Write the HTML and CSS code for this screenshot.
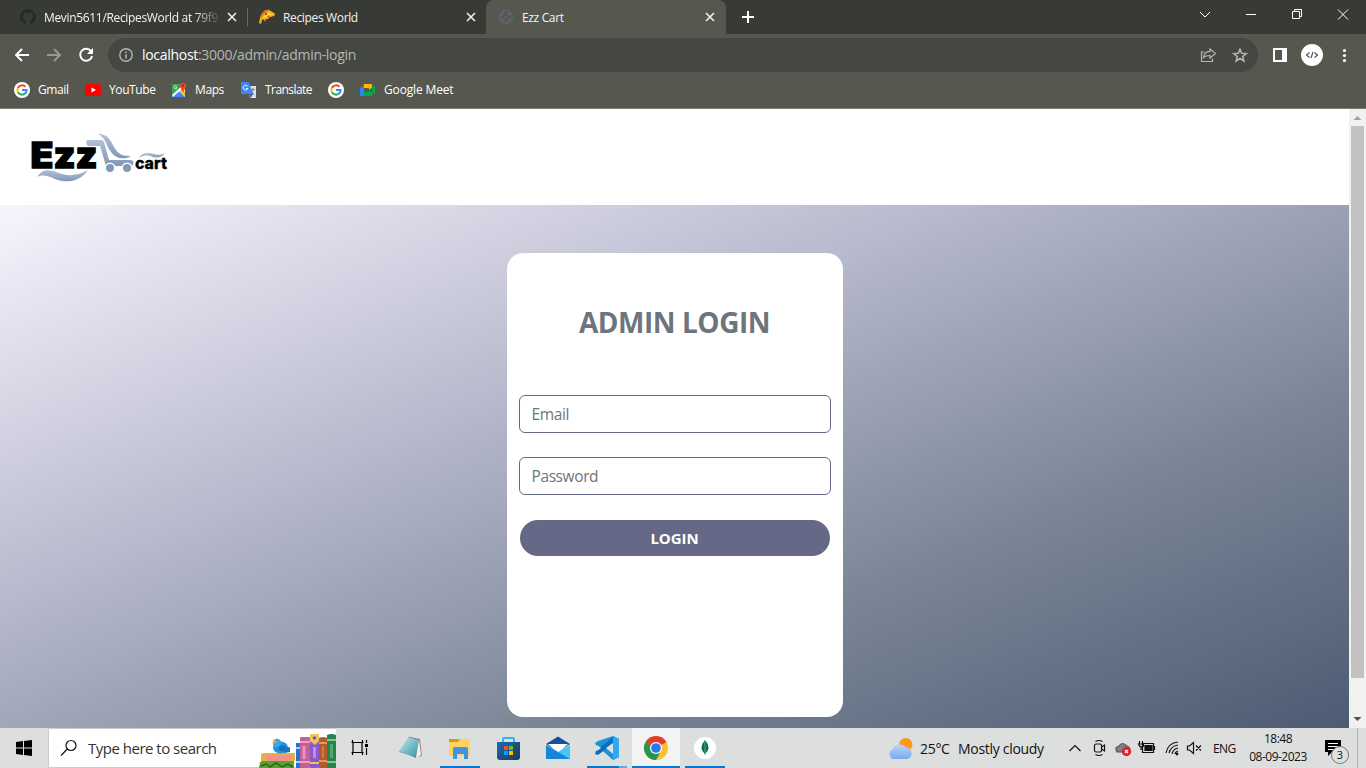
FILE: index.html
```html
<!DOCTYPE html>
<html lang="en">
<head>
<meta charset="utf-8">
<title>Ezz Cart</title>
<link rel="stylesheet" href="styles.css">
</head>
<body>
<svg class="defs" width="0" height="0" aria-hidden="true">
  <symbol id="x" viewBox="0 0 10 10"><path d="M1 1 9 9M9 1 1 9" fill="none" stroke="#f1f1f1" stroke-width="1.6"/></symbol>
  <symbol id="google" viewBox="0 0 16 16"><circle cx="8" cy="8" r="8" fill="#fff"/><g fill="none" stroke-width="2"><path d="M11.4 4.7A4.6 4.6 0 0 0 3.9 6" stroke="#ea4335"/><path d="M3.9 6a4.6 4.6 0 0 0 0 4.1" stroke="#fbbc05"/><path d="M3.9 10.1a4.6 4.6 0 0 0 7.1 1.4" stroke="#34a853"/><path d="M8 8.1h4.6a4.7 4.7 0 0 1-1.6 3.4" stroke="#4285f4"/></g></symbol>
</svg>

<header class="tabs">
  <div class="tab tab-first">
    <svg class="fav" viewBox="0 0 16 16"><path fill="#24292f" d="M8 0a8 8 0 0 0-2.5 15.6c.4.1.5-.2.5-.4v-1.5c-2 .5-2.7-.5-2.9-1-.1-.3-.6-1-1-1.200-.3-.2-.8-.6 0-.6s1.200.6 1.400.9c.8 1.300 2 .9 2.500.7.1-.6.300-1 .6-1.200-1.800-.2-3.700-.9-3.700-4 0-.9.300-1.600.8-2.100-.1-.2-.4-1 .1-2.100 0 0 .7-.2 2.200.8a7.600 7.600 0 0 1 4 0c1.500-1 2.200-.8 2.200-.8.4 1.100.2 1.900.1 2.100.5.6.8 1.300.8 2.200 0 3.100-1.900 3.800-3.700 4 .300.200.600.700.600 1.500v2.200c0 .200.100.500.500.400A8 8 0 0 0 8 0Z"/></svg>
    <span class="tab-name name-a">Mevin5611/RecipesWorld at 79f9</span>
    <svg class="close"><use href="#x"/></svg>
  </div>
  <div class="tab tab-second">
    <svg class="fav" viewBox="0 0 16 16"><path d="M0 14 1 9C3 4 6 0 10 1l5 3q2 1 0 3l-4 1-2 2-2 0-1 3-1-3-2 1-1 4Z" fill="#f4b321"/><path d="M1 8C3 3 6 0 10 1L8 3C5 4 4 6 2 10Z" fill="#d87916"/><path d="m8 4 6 1-8 3-3 2Z" fill="#ffdc49"/><circle cx="7" cy="5" r="1.200" fill="#d33c22"/><circle cx="9.500" cy="7.500" r=".9" fill="#d33c22"/></svg>
    <span class="tab-name name-b">Recipes World</span>
    <svg class="close"><use href="#x"/></svg>
  </div>
  <div class="tab tab-active">
    <svg class="fav" viewBox="0 0 16 16"><circle cx="8" cy="8" r="7.200" fill="#5f6368"/><path d="M2 8q3-.500 4 1.500h3L7 13M10 2 7 3.500 6 6h3l2 2 3-1" fill="none" stroke="#51554f" stroke-width="1.700"/></svg>
    <span class="tab-name name-c">Ezz Cart</span>
    <svg class="close"><use href="#x"/></svg>
  </div>
  <svg class="plus" viewBox="0 0 12 12"><path d="M6 0v12M0 6h12" stroke="#fff" stroke-width="2"/></svg>
  <svg class="winctl" viewBox="0 0 160 34" fill="none" stroke="#fff"><path d="m10 12 5 5 5-5M56 14.500h10M102.500 11.500h7v7h-7zM104.500 11v-1.500h7v7h-2M148 9.500l10 10m0-10-10 10"/></svg>
</header>

<div class="toolbar">
  <svg class="nav" viewBox="0 0 108 42" fill="none" stroke-width="1.900"><path d="M29 21H16m6-6-6 6 6 6" stroke="#fff"/><path d="M47 21h13m-6-6 6 6-6 6" stroke="#979992"/><path d="M91.300 17.500a6 6 0 1 0 .8 4.500" stroke="#fff"/><path d="M93 14v6h-6z" fill="#fff"/></svg>
  <div class="address">
    <svg class="info" viewBox="0 0 14 14"><circle cx="7" cy="7" r="6.200" fill="none" stroke="#b5b7b3" stroke-width="1.400"/><path d="M7 6.200V10.500M7 3.500v1.500" stroke="#b5b7b3" stroke-width="1.500"/></svg>
    <span class="url"><b>localhost</b>:3000/admin/admin-login</span>
    <svg class="actions" viewBox="0 0 50 34" fill="none" stroke="#b3b5b0" stroke-width="1.200"><path d="M4.500 14h-3v9.500h11v-3M10 11l5.500 4.500L10 20v-2.500c-3 0-5 .5-6.500 2 .5-4 3-6 6.500-6.200z"/><path d="m40 11 1.700 4.300 4.600.3-3.600 2.900 1.200 4.500-3.900-2.500-3.900 2.500 1.200-4.500-3.600-2.900 4.600-.3z" stroke-width="1.500"/></svg>
  </div>
  <svg class="extras" viewBox="0 0 108 42"><path d="M15 14h14v14H15zM17 16v10h7V16z" fill="#fff" fill-rule="evenodd"/><circle cx="54" cy="21" r="11" fill="#fff"/><path d="m51.500 18.500-3 2.500 3 2.500m5-5 3 2.500-3 2.500m-1.500-5.500-2 6" fill="none" stroke="#555" stroke-width="1.200"/><g fill="#fff"><circle cx="86.500" cy="16.500" r="1.600"/><circle cx="86.500" cy="21.500" r="1.600"/><circle cx="86.500" cy="26.500" r="1.600"/></g></svg>
</div>

<nav class="bookmarks">
  <a class="bm bm-gmail"><svg><use href="#google"/></svg><span>Gmail</span></a>
  <a class="bm bm-youtube"><svg viewBox="0 0 16 16"><rect y="2" width="16" height="12" rx="2.500" fill="red"/><path d="m6.500 5.500 4.500 2.500-4.500 2.500z" fill="#fff"/></svg><span>YouTube</span></a>
  <a class="bm bm-maps"><svg viewBox="0 0 16 16"><path d="M1 2h13v13H1z" fill="#e8eaed"/><path d="M1 2h9v5l-9 8z" fill="#34a853"/><path d="m1 15 6-7 7 7z" fill="#4285f4"/><path d="M1 13 11 4l1 2L2 15z" fill="#fff"/><path d="m9 9 5 5v-4l-4-3z" fill="#fbbc04"/><path d="M12 10 9 5a3.200 3.200 0 1 1 6 0z" fill="#ea4335"/><circle cx="12" cy="3.600" r="1.100" fill="#8e261d"/><path d="M5.800 4.500a1.500 1.500 0 1 0 .2 1.200H4.500" stroke="#fff" fill="none" stroke-width=".7"/></svg><span>Maps</span></a>
  <a class="bm bm-translate"><svg viewBox="0 0 16 16"><path d="M6 4h9v12H9z" fill="#dce0e4"/><path d="M1 0h7l4 12H1q-1 0-1-1V1q0-1 1-1" fill="#4285f4"/><path d="m8 12 1.500 4 2.500-4z" fill="#285bb8"/><path d="M6.700 4.400a2.400 2.400 0 1 0 .2 2H4.800" fill="none" stroke="#fff"/><path d="M10 7.500H14M11.900 6v2c0 2-1 3-2 4m.5-3 3 4" fill="none" stroke="#6a7785" stroke-width=".8"/></svg><span>Translate</span></a>
  <a class="bm bm-google"><svg><use href="#google"/></svg></a>
  <a class="bm bm-meet"><svg viewBox="0 0 16 16"><path d="M0 6h4v8H1q-1 0-1-1z" fill="#2684fc"/><path d="m4 2-4 4h4z" fill="#ea4335"/><path d="M4 2h7q1 0 1 1v5H9V6H4z" fill="#fb0"/><path d="M4 10h5V8h3v5q0 1-1 1H4z" fill="#00ac47"/><path d="m9 8 3-2.500V10.500z" fill="#00832d"/><path d="m12 5.500 2.500-2q.5 0 .5.500v8q0 .500-.5.500l-2.500-2z" fill="#00ac47"/></svg><span>Google Meet</span></a>
</nav>

<main class="viewport">
  <div class="page">
    <div class="site-head">
      <svg class="logo" viewBox="0 0 160 84">
        <defs><linearGradient id="lg" x2="0" y2="1"><stop stop-color="#b2c1d6"/><stop offset="1" stop-color="#8197b6"/></linearGradient></defs>
        <g fill="url(#lg)"><path d="M17 57c5-8 12-8 19-5 10 4 20 5 32-2-7 11-21 14-33 9-7-3-12-5-18-2Z"/><path d="M78 14c12 0 13 9 18 16 3 5 8 6 15 6-6 4-15 3-20-4-6-8-5-14-13-18Z"/><path d="M67 20h14q2 0 3 2l5 18h20q6 0 4 4l-1 2H86l-6-20H68q-3-3-1-6Z"/><circle cx="90" cy="48" r="4.500"/><circle cx="107" cy="48" r="4.500"/><path d="M119 38c5-7 10-5 15-4 4 1 7 1 11-1-3 5-8 5-12 4-5-2-8-3-14 1Z"/></g>
        <g fill="#fff"><circle cx="90" cy="48" r="5.500"/><circle cx="107" cy="48" r="5.500"/></g><g fill="#8399b7"><circle cx="90" cy="48" r="4"/><circle cx="107" cy="48" r="4"/></g>
        <text class="logo-ezz" x="10.500" y="48" textLength="67" lengthAdjust="spacingAndGlyphs">Ezz</text>
        <text class="logo-cart" x="115" y="49" textLength="32" lengthAdjust="spacingAndGlyphs">cart</text>
      </svg>
    </div>
    <div class="stage">
      <form class="card">
        <h1>ADMIN LOGIN</h1>
        <input class="field email" type="text" placeholder="Email">
        <input class="field password" type="text" placeholder="Password">
        <button class="submit" type="button">LOGIN</button>
      </form>
    </div>
  </div>
  <div class="scrollbar">
    <svg viewBox="0 0 17 17"><path d="M4.500 11h8l-4-4z" fill="#a3a3a3"/></svg>
    <div class="thumb"></div>
    <svg viewBox="0 0 17 17"><path d="M4.500 6h8l-4 4z" fill="#505050"/></svg>
  </div>
</main>

<footer class="taskbar">
  <div class="start"><svg viewBox="0 0 16 16"><path d="m0 2 7-1v6.500H0zM8 1l8-1v7.500H8zM0 8.500h7V15l-7-1zM8 8.500h8V16l-8-1z"/></svg></div>
  <div class="search">
    <svg class="glass" viewBox="0 0 18 18"><circle cx="11" cy="6.500" r="5" fill="none" stroke="#111" stroke-width="1.200"/><path d="m7.400 10-6.400 6.500" stroke="#111" stroke-width="1.200"/></svg>
    <span>Type here to search</span>
    <svg class="books" viewBox="0 0 78 40">
      <path d="M2 34q3-2 8-1h26v7H1Z" fill="#58a12e"/><path d="m3 38 5-2 4 3 6-4 6 4 6-3 5 3" fill="none" stroke="#2e6519" stroke-width="1.500"/>
      <path d="M3 27q0-2 3-2h31v8H3Z" fill="#e9ae42"/><path d="M11 27h19l4 3-4 3H11q-7-3 0-6Z" fill="#ef918c"/>
      <ellipse cx="22.500" cy="19.500" rx="7.500" ry="6" fill="#278fdd"/><circle cx="19" cy="15" r="4.300" fill="#3aa5ed"/><path d="m15.500 11-.5 5 4-2z" fill="#f5ad32"/><path d="M21 18q5-2 8 2-3 5-8 2z" fill="#1570bf"/><path d="m26 20 6-1v5l-6 1z" fill="#1b74c4"/>
      <rect x="38" y="15" width="5" height="25" fill="#2773d2"/><path d="M38 20h5m-5 14h5" stroke="#9ed4fb" stroke-width="2"/>
      <rect x="42" y="9" width="10" height="31" rx="1" fill="#c26098"/><path d="M42 14h10m-10 20h10" stroke="#f0a0bb" stroke-width="2"/><path d="M46 18v13" stroke="#ea91bd" stroke-width="3"/>
      <rect x="52" y="6" width="9" height="34" rx="1" fill="#8b5ac6"/><path d="M52 6h9v7l-4 4-5-4z" fill="#f0c458"/><path d="m56.500 8 2 2-2 2-2-2z" fill="#7745ad"/><path d="M52 35h9" stroke="#f0c458" stroke-width="2"/><path d="M56.500 19v11" stroke="#bc91e2" stroke-width="3"/>
      <path d="M61 10q4-2 8 0v30h-8z" fill="#b25b2c"/><path d="M61 15h8m-8 18h8" stroke="#e39a55" stroke-width="2"/><path d="M65 18v12" stroke="#d07a42" stroke-width="2"/>
      <path d="M69 7q4-2 9 0v33h-9z" fill="#278350"/><path d="M69 12h9m-9 22h9" stroke="#84c687" stroke-width="2"/><path d="M73.500 16v14" stroke="#4daa6b" stroke-width="3"/>
    </svg>
  </div>
  <svg class="launcher" viewBox="336 0 408 40">
    <defs><linearGradient id="note" x2="1" y2="1"><stop stop-color="#c4edf1"/><stop offset="1" stop-color="#318fa7"/></linearGradient><linearGradient id="store" x2="1" y2="1"><stop stop-color="#176cb8"/><stop offset="1" stop-color="#203758"/></linearGradient></defs>
    <g fill="none" stroke="#000" stroke-width="1.200"><path d="M352.500 12v2.500h10V12M352.500 27v-2.500h10V27M351.500 24.500h12M351.500 14.500h12M353 14.500v10M362 14.500v10M366.500 12v3m0 5v7"/></g><path d="M365 16h3v3h-3z"/>
    <path d="m409 9 11 2 2 17-5 1-18-5Z" fill="#8f8980"/><path d="m409 9 10 3-3 18-17-7Z" fill="url(#note)"/><path d="m419 12 2 15-5 3Z" fill="#f3f2e9"/><path d="m409 9 11 3" stroke="#777" stroke-dasharray="1 1"/>
    <path d="M449 11h21v17h-21z" fill="#ffd35d"/><path d="M449 11h9l2 1-2 2h-9z" fill="#d79a12"/><path d="M453 21q0-2 2-2h11q2 0 2 2v10h-4v-5h-7v5h-4Z" fill="#3d95df"/>
    <path d="M503 15v-4q0-1 1-1h9q1 0 1 1v4" stroke="#32b7ed" stroke-width="2" fill="none"/><path d="M497 14h23v15q0 3-3 3h-17q-3 0-3-3z" fill="url(#store)"/><path d="M504 18h4v4h-4z" fill="#f25022"/><path d="M509 18h4v4h-4z" fill="#7fba00"/><path d="M504 23h4v4h-4z" fill="#00a4ef"/><path d="M509 23h4v4h-4z" fill="#ffb900"/>
    <path d="m546 16 12-7.500 12 7.500-12 8z" fill="#164f9c"/><path d="M548 16h20l-10 9z" fill="#fff"/><path d="m546 17 12 7 12-7v14h-24Z" fill="#42c6f5"/><path d="M546 17v14h24Z" fill="#1686d8"/>
    <path d="m613 8 6 3v18l-6 3-17-15-1-2 3-2Z" fill="#1d91db"/><path d="m596 23-1 3 3 1 16-12V8Z" fill="#0870bc"/><path d="m613 8 6 3v18l-6 3Z" fill="#2caaf2"/><path d="m613 15-7 5 7 6Z" fill="#dfe1e0"/><path d="m597 17 4 3-4 3Z" fill="#dfe1e0"/>
    <path d="M632 0h48v40h-48z" fill="#f2f3f3"/><circle cx="656" cy="20" r="12" fill="#fbc02d"/><path d="M656 20 645.600 14A12 12 0 0 1 666.400 14Z" fill="#e33b2e"/><path d="M656 20 645.600 14A12 12 0 0 0 656 32l5-9Z" fill="#27964c"/><circle cx="656" cy="20" r="6" fill="#fff"/><circle cx="656" cy="20" r="4.800" fill="#2878e6"/>
    <circle cx="705" cy="20" r="11" fill="#fff"/><path d="M705 12q7 8 0 14-7-6 0-14Z" fill="#087449"/><path d="M705 13v14" stroke="#56a380"/>
    <path d="M440 38h40v2h-40zM587 38h32v2h-32zM632 38h48v2h-48zM685 38h40v2h-40z" fill="#0877d2"/><path d="M619 38h8v2h-8z" fill="#65a9e4"/>
  </svg>
  <div class="weather">
    <svg viewBox="0 0 26 22"><defs><linearGradient id="cloud" x2="0" y2="1"><stop stop-color="#bcd5fb"/><stop offset="1" stop-color="#7ca9ed"/></linearGradient></defs><circle cx="18" cy="7.500" r="6.500" fill="#f99b18"/><path d="M5.500 21a5 5 0 0 1-.5-9 8 8 0 0 1 13.500-2A5.700 5.700 0 0 1 20 21Z" fill="url(#cloud)"/></svg>
    <span class="temp">25°C</span><span class="sky">Mostly cloudy</span>
  </div>
  <svg class="tray" viewBox="1064 0 140 40" fill="none" stroke="#111" stroke-width="1.200">
    <path d="m1069.500 23 5.500-5.500 5.500 5.500"/><rect x="1094.500" y="16" width="7" height="8" rx="1.500"/><path d="m1101.500 19 3-2v6l-3-2M1095.500 13.500q3.500-2 7 0M1095.500 26.500q3.500 2 7 0"/>
    <path d="M1117 24q-3-5 2-6 3-5 8 0 4 1 2 6Z" fill="#7d8080" stroke="#555"/><circle cx="1126.500" cy="23.500" r="4.700" fill="#e11e2b" stroke="none"/><path d="m1125 22 3 3m0-3-3 3" stroke="#fff"/>
    <path d="M1142.500 15.500h11v9h-11zM1154.500 18v4M1139.500 13v3m3-3v3m-4 0h5v2q-2 2-4 0zM1141 19v3"/><path d="M1145 17.500h7v5h-7z" fill="#111"/>
    <path d="M1166 25q2-10 12-11M1169 25q2-7 9-8M1172 26q1-5 6-6M1175 26q0-2 3-3"/><circle cx="1177" cy="26" r=".8" fill="#111"/>
    <path d="M1187.500 18v4h2l4 3.500v-11l-4 3.500zM1196 17.500l5 5m0-5-5 5"/>
  </svg>
  <span class="lang">ENG</span>
  <div class="clock"><span class="time">18:48</span><span class="date">08-09-2023</span></div>
  <div class="notices"><svg viewBox="0 0 18 18"><path d="M1 0h16v12H8l-4 4v-4H1z" fill="#000"/><path d="M4 3.500h10M4 6.500h10M4 9.500h7" stroke="#fff"/></svg><span class="count">3</span></div>
</footer>
</body>
</html>
```
FILE: styles.css
```css
* { box-sizing: border-box; }
body {
  margin: 0;
  width: 1366px;
  height: 768px;
  overflow: hidden;
  display: flex;
  flex-direction: column;
  font-family: "Open Sans", "Noto Sans", sans-serif;
  font-size: 12px;
}
svg { display: block; flex: none; }
span { white-space: nowrap; }
.defs { position: absolute; }

.tabs { height: 34px; background: #383a36; display: flex; flex: none; color: #f4f4f2; }
.tab { height: 34px; display: flex; align-items: center; padding-right: 10px; flex: none; }
.tab-first { width: 247px; padding-left: 20px; }
.tab-second { width: 239px; padding-left: 12px; background: linear-gradient(#686a66, #686a66) 0 8px / 1px 18px no-repeat; }
.tab-active { width: 240px; padding: 0 11px 0 12px; background: #565850; border-radius: 8px 8px 0 0; }
.fav { width: 16px; height: 16px; margin-right: 8px; }
.tab-name { overflow: hidden; flex: 1; }
.name-a { letter-spacing: -.33px; margin-right: 8px; mask-image: linear-gradient(90deg, #000 150px, transparent 178px); }
.name-b, .name-c { letter-spacing: -.35px; }
.close { width: 10px; height: 10px; }
.plus { width: 12px; height: 12px; margin: 11px 0 0 16px; }
.winctl { width: 160px; height: 34px; margin-left: auto; margin-right: 16px; }

.toolbar { height: 42px; background: #565850; display: flex; align-items: center; flex: none; }
.nav { width: 108px; height: 42px; }
.address { width: 1150px; height: 34px; border-radius: 17px; background: #454743; display: flex; align-items: center; padding-left: 11px; }
.info { width: 14px; height: 14px; }
.url { margin: -1px 0 0 9px; font-size: 14px; letter-spacing: -.3px; color: #b5b7b3; }
.url b { color: #fff; font-weight: 400; }
.actions { width: 50px; height: 34px; margin-left: auto; margin-right: 8px; }
.extras { width: 108px; height: 42px; }

.bookmarks { height: 33px; background: #565850; border-bottom: 1px solid #7d7b75; display: flex; padding: 0 0 5px 14px; align-items: center; color: #fff; flex: none; }
.bm { display: flex; align-items: center; gap: 8px; letter-spacing: -.4px; flex: none; }
.bm svg { width: 16px; height: 16px; }
.bm-gmail { width: 71px; }
.bm-youtube { width: 86px; }
.bm-maps { width: 70px; }
.bm-translate { width: 87px; letter-spacing: -.55px; }
.bm-google { width: 32px; }
.bm-meet { letter-spacing: -.15px; }

.viewport { height: 619px; display: flex; flex: none; }
.page { width: 1349px; overflow: hidden; }
.site-head { height: 96px; background: #fff; padding: 11px 20px; }
.logo { width: 160px; height: 84px; }
.logo-ezz { font: 900 36px Inter, Roboto, sans-serif; stroke: #000; stroke-width: 1.3px; }
.logo-cart { font: 800 16px Inter, Roboto, sans-serif; stroke: #000; stroke-width: .3px; }
.stage { height: 560px; padding-top: 48px; background: linear-gradient(to bottom right, #f8f4ff, #b8bacd 35%, #7b8797 66%, #48566f); }
.card { width: 336px; height: 464px; margin: 0 auto; padding: 48px 12px 0; border-radius: 16px; background: #fff; display: flex; flex-direction: column; }
.card h1 { margin: 0 0 52px; height: 42px; line-height: 43px; text-align: center; font-size: 28px; font-weight: 700; letter-spacing: -.45px; color: #6c757d; }
.field { height: 38px; margin: 0 0 24px; border: 1px solid #65698a; border-radius: 6px; padding: 0 12px; font: 15.5px "Open Sans", sans-serif; letter-spacing: -.4px; }
.field::placeholder { color: #6c757d; opacity: 1; }
.submit { height: 36px; margin: 1px 1px 0; border: 0; border-radius: 18px; background: #656987; color: #fff; font: 700 15px "Open Sans", sans-serif; letter-spacing: -.05px; }
.scrollbar { width: 17px; background: #f1f1f1; display: flex; flex-direction: column; }
.scrollbar svg { width: 17px; height: 17px; }
.thumb { height: 552px; margin: 0 2px 33px; background: #c1c1c1; }

.taskbar { height: 40px; background: #dddfdf; display: flex; align-items: center; flex: none; color: #111; }
.start { width: 48px; padding-left: 16px; }
.start svg { width: 16px; height: 16px; }
.search { width: 288px; height: 40px; background: #fff; border: 1px solid #ccc; border-right: 0; display: flex; align-items: center; font-size: 15px; letter-spacing: -.5px; color: #333; }
.glass { width: 18px; height: 18px; margin: 0 10px 0 11px; }
.books { width: 78px; height: 40px; margin-left: auto; }
.launcher { width: 408px; height: 40px; }
.weather { width: 320px; padding-left: 143px; display: flex; align-items: center; font-size: 14px; letter-spacing: -.3px; }
.weather svg { width: 27px; height: 23px; }
.temp { width: 38px; margin-left: 6px; flex: none; }
.tray { width: 140px; height: 40px; }
.lang { width: 41px; padding-left: 9px; letter-spacing: -.6px; flex: none; }
.clock { width: 66px; display: flex; flex-direction: column; align-items: center; line-height: 18px; letter-spacing: -.5px; margin-top: -1px; }
.notices { position: relative; width: 51px; height: 40px; padding: 12px 0 0 13px; }
.notices::after { content: ""; position: absolute; right: 4px; top: 0; width: 1px; height: 40px; background: #b4b6b6; }
.notices svg { width: 18px; height: 18px; }
.count { position: absolute; left: 20px; top: 18px; width: 18px; height: 18px; border: 1px solid #777; border-radius: 50%; background: #dfe1e1; font-size: 11px; line-height: 16px; text-align: center; }
```
